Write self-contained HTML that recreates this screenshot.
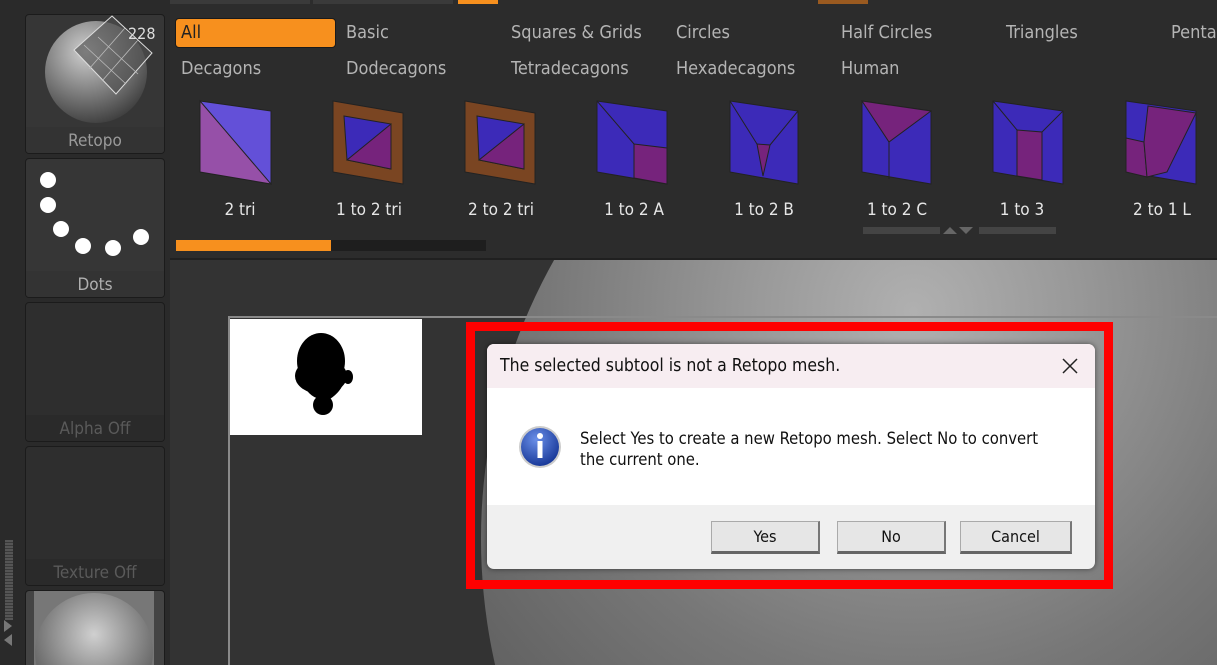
<!DOCTYPE html>
<html><head><meta charset="utf-8"><style>
*{margin:0;padding:0;box-sizing:border-box}
html,body{width:1217px;height:665px;overflow:hidden}
body{background:#2c2c2c;font-family:"Liberation Sans",sans-serif;position:relative}
.a{position:absolute}
.cat{position:absolute;color:#b4b4b4;font-size:18px;font-family:"DejaVu Sans Condensed","Liberation Sans",sans-serif}
.lbl{position:absolute;color:#e6e6e6;font-size:17px;font-family:"DejaVu Sans Condensed","Liberation Sans",sans-serif;width:120px;text-align:center}
.tile{position:absolute;left:25px;width:140px;background:#363636;border:1px solid #1b1b1b;border-radius:4px;overflow:hidden}
.tl{position:absolute;bottom:0;left:0;right:0;height:26px;background:#2e2e2e;color:#9a9a9a;text-align:center;font-size:17px;line-height:28px;font-family:"DejaVu Sans Condensed","Liberation Sans",sans-serif}
.btn{position:absolute;top:521px;height:33px;background:#e6e6e6;border:1px solid #aaa;border-right:2px solid #777;border-bottom:3px solid #666;font-size:16px;text-align:center;line-height:30px;color:#111;font-family:"DejaVu Sans Condensed","Liberation Sans",sans-serif}
</style></head><body>
<div class="a" style="left:75px;top:0;width:90px;height:4px;background:#3a3a3a"></div>
<div class="a" style="left:170px;top:0;width:140px;height:4px;background:#3a3a3a"></div>
<div class="a" style="left:313px;top:0;width:140px;height:4px;background:#3a3a3a"></div>
<div class="a" style="left:458px;top:0;width:40px;height:4px;background:#f7901e"></div>
<div class="a" style="left:818px;top:0;width:50px;height:4px;background:#9a5a20"></div>
<div class="a" style="left:0;top:0;width:170px;height:665px;background:#2a2a2a"></div>
<div class="tile" style="top:14px;height:140px">
 <svg width="140" height="112" style="position:absolute;left:0;top:0">
  <defs><radialGradient id="g1" cx="0.4" cy="0.3" r="0.75"><stop offset="0" stop-color="#d0d0d0"/><stop offset="1" stop-color="#3a3a3a"/></radialGradient></defs>
  <circle cx="70" cy="57" r="51" fill="url(#g1)"/>
  <polygon points="86,1 126,38 90,79 48,35" fill="rgba(80,80,80,.65)" stroke="#ddd" stroke-width="1"/>
  <g stroke="#bbb" stroke-width="0.8"><line x1="72" y1="22" x2="112" y2="59"/><line x1="58" y1="30" x2="100" y2="69"/><line x1="99" y1="13" x2="63" y2="54"/><line x1="112" y1="25" x2="76" y2="66"/></g>
  <text x="102" y="24" fill="#ddd" font-size="16" font-family="DejaVu Sans Condensed">228</text>
 </svg>
 <div class="tl" style="background:#333">Retopo</div>
</div>
<div class="tile" style="top:158px;height:140px">
 <svg width="140" height="112" style="position:absolute;left:0;top:0"><g fill="#fff">
 <circle cx="22" cy="21" r="8"/><circle cx="22" cy="46" r="8"/><circle cx="35" cy="70" r="8"/><circle cx="57" cy="87" r="8"/><circle cx="87" cy="89" r="8"/><circle cx="115" cy="78" r="8"/></g></svg>
 <div class="tl" style="background:#333;color:#b0b0b0">Dots</div>
</div>
<div class="tile" style="top:302px;height:140px;background:#2e2e2e"><div class="tl" style="color:#5a5a5a;background:#2a2a2a">Alpha Off</div></div>
<div class="tile" style="top:446px;height:140px;background:#2e2e2e"><div class="tl" style="color:#5a5a5a;background:#2a2a2a">Texture Off</div></div>
<div class="tile" style="top:590px;height:75px;background:#444;border-bottom:none;border-radius:4px 4px 0 0">
 <div class="a" style="left:8px;top:0;width:120px;height:75px;background:#777"></div>
 <div class="a" style="left:9px;top:2px;width:118px;height:118px;border-radius:50%;background:radial-gradient(circle at 50% 35%,#d0d0d0,#555 80%)"></div>
</div>
<div class="a" style="left:5px;top:540px;width:8px;height:80px;background:repeating-linear-gradient(0deg,#555 0 2px,#3a3a3a 2px 3px)"></div>
<div class="a" style="left:4px;top:620px;width:0;height:0;border-top:6px solid transparent;border-bottom:6px solid transparent;border-left:8px solid #777"></div>
<div class="a" style="left:4px;top:634px;width:0;height:0;border-top:6px solid transparent;border-bottom:6px solid transparent;border-right:8px solid #777"></div>
<div class="a" style="left:175px;top:18px;width:161px;height:30px;background:#f7901e;border:1px solid #1a1a1a;border-radius:4px;font-size:18px;color:#222;padding-left:5px;line-height:28px;font-family:'DejaVu Sans Condensed','Liberation Sans',sans-serif">All</div>
<div class="cat" style="left:346px;top:22px">Basic</div>
<div class="cat" style="left:511px;top:22px">Squares &amp; Grids</div>
<div class="cat" style="left:676px;top:22px">Circles</div>
<div class="cat" style="left:841px;top:22px">Half Circles</div>
<div class="cat" style="left:1006px;top:22px">Triangles</div>
<div class="cat" style="left:1171px;top:22px">Penta</div>
<div class="cat" style="left:181px;top:58px">Decagons</div>
<div class="cat" style="left:346px;top:58px">Dodecagons</div>
<div class="cat" style="left:511px;top:58px">Tetradecagons</div>
<div class="cat" style="left:676px;top:58px">Hexadecagons</div>
<div class="cat" style="left:841px;top:58px">Human</div>
<svg class="a" style="left:0;top:0" width="1217" height="240">
 <g stroke="#222" stroke-width="1">
 <polygon points="200,101 271,111 271,184 200,172" fill="#6350d8"/><polygon points="200,101 271,184 200,172" fill="#9650a8"/>
 <polygon points="333,101 403,113 403,184 333,172" fill="#7a4522"/><polygon points="344,116 391,124 391,169 347,160" fill="#3c2ab8"/><polygon points="391,124 391,169 347,160" fill="#76237c"/>
 <polygon points="465,101 535,113 535,184 465,172" fill="#7a4522"/><polygon points="477,116 524,124 524,169 479,160" fill="#3c2ab8"/><polygon points="524,124 524,169 479,160" fill="#76237c"/>
 <polygon points="597,101 667,111 667,184 597,172" fill="#3c2ab8"/><line x1="597" y1="101" x2="634" y2="144"/><polygon points="634,144 667,148 667,184 634,178" fill="#76237c"/>
 <polygon points="730,101 798,111 798,184 730,172" fill="#3c2ab8"/><line x1="730" y1="101" x2="757" y2="144"/><line x1="798" y1="111" x2="770" y2="145"/><polygon points="757,144 770,145 763,176" fill="#76237c"/>
 <polygon points="862,101 931,111 931,184 862,172" fill="#3c2ab8"/><polygon points="862,101 931,111 889,142" fill="#76237c"/><line x1="889" y1="142" x2="889" y2="179"/>
 <polygon points="993,101 1063,111 1063,184 993,172" fill="#3c2ab8"/><polygon points="1017,130 1042,132 1042,180 1017,176" fill="#76237c"/><line x1="993" y1="101" x2="1017" y2="130"/><line x1="1063" y1="111" x2="1042" y2="132"/>
 <polygon points="1126,101 1196,111 1196,184 1126,172" fill="#3c2ab8"/><polygon points="1126,138 1144,142 1147,177 1126,172" fill="#76237c"/><polygon points="1148,106 1196,113 1167,172 1147,177 1144,142" fill="#76237c"/>
 </g>
 <rect x="863" y="227" width="77" height="7" fill="#444"/><rect x="979" y="227" width="77" height="7" fill="#444"/>
 <polygon points="943,234 950,227 957,234" fill="#666"/><polygon points="959,227 973,227 966,234" fill="#666"/>
</svg>
<div class="lbl" style="left:180px;top:200px">2 tri</div>
<div class="lbl" style="left:309px;top:200px">1 to 2 tri</div>
<div class="lbl" style="left:441px;top:200px">2 to 2 tri</div>
<div class="lbl" style="left:574px;top:200px">1 to 2 A</div>
<div class="lbl" style="left:704px;top:200px">1 to 2 B</div>
<div class="lbl" style="left:837px;top:200px">1 to 2 C</div>
<div class="lbl" style="left:962px;top:200px">1 to 3</div>
<div class="lbl" style="left:1102px;top:200px">2 to 1 L</div>
<div class="a" style="left:176px;top:240px;width:310px;height:11px;background:#1e1e1e"></div>
<div class="a" style="left:176px;top:240px;width:155px;height:11px;background:#f7901e"></div>
<div class="a" style="left:170px;top:258px;width:1047px;height:407px;background:#333;border-top:2px solid #202020;overflow:hidden">
 <div class="a" style="left:311px;top:-290px;width:1138px;height:1138px;border-radius:50%;background:radial-gradient(circle at 38% 30%,#b0b0b0 0%,#999 15%,#777 35%,#5e5e5e 55%,#474747 68%,#353535 72%)"></div>
</div>
<div class="a" style="left:228px;top:316px;width:989px;height:2px;background:#8a8a8a"></div>
<div class="a" style="left:228px;top:316px;width:2px;height:349px;background:#8a8a8a"></div>
<div class="a" style="left:230px;top:319px;width:192px;height:116px;background:#fff">
 <svg width="192" height="116"><g fill="#000"><ellipse cx="91" cy="42" rx="24" ry="28"/><ellipse cx="91" cy="57" rx="26" ry="18"/><ellipse cx="118" cy="58" rx="5" ry="7"/><circle cx="93" cy="86" r="10"/><path d="M70,60 Q78,78 90,80 L100,80 Q112,72 115,60 Z"/></g></svg>
</div>
<div class="a" style="left:466px;top:322px;width:647px;height:267px;border:9px solid #f00"></div>
<div class="a" style="left:487px;top:344px;width:608px;height:225px;background:#f0f0f0;border-radius:7px;overflow:hidden;box-shadow:0 0 6px rgba(0,0,0,.5)">
 <div class="a" style="left:0;top:0;width:608px;height:44px;background:#f7edf1;font-size:17.5px;line-height:44px;padding-left:13px;color:#111;font-family:'DejaVu Sans Condensed','Liberation Sans',sans-serif">The selected subtool is not a Retopo mesh.</div>
 <svg class="a" style="left:575px;top:14px" width="16" height="16"><path d="M1 1L15 15M15 1L1 15" stroke="#222" stroke-width="1.5"/></svg>
 <div class="a" style="left:0;top:44px;width:608px;height:117px;background:#fff"></div>
 <svg class="a" style="left:30px;top:80px" width="46" height="46"><defs><radialGradient id="ib" cx=".4" cy=".3" r=".7"><stop offset="0" stop-color="#6a8fe8"/><stop offset="1" stop-color="#1a3a9a"/></radialGradient></defs><circle cx="23" cy="23" r="21" fill="#ccc"/><circle cx="23" cy="23" r="19" fill="url(#ib)"/><circle cx="23" cy="12" r="3" fill="#fff"/><rect x="20.5" y="17" width="5" height="17" fill="#fff"/></svg>
 <div class="a" style="left:93px;top:84px;font-size:16.5px;line-height:21px;color:#111;white-space:nowrap;font-family:'DejaVu Sans Condensed','Liberation Sans',sans-serif">Select Yes to create a new Retopo mesh. Select No to convert<br>the current one.</div>
</div>
<div class="btn" style="left:711px;width:109px">Yes</div>
<div class="btn" style="left:837px;width:109px">No</div>
<div class="btn" style="left:960px;width:112px">Cancel</div>
</body></html>
